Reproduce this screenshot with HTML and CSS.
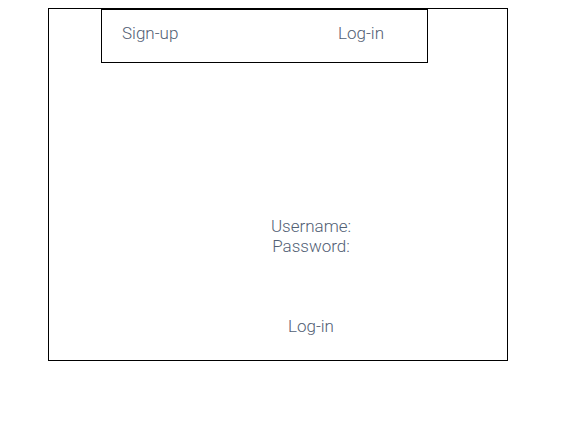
FILE: index.html
```html
<!DOCTYPE html>
<html lang="en">
<head>
<meta charset="utf-8">
<title>Log-in</title>
<link rel="stylesheet" href="styles.css">
</head>
<body>
<main class="page">
  <nav class="menu">
    <a class="menu-link" href="#signup">Sign-up</a>
    <a class="menu-link" href="#login">Log-in</a>
  </nav>
  <form class="login" id="login">
    <div class="fields">
      <div>Username:</div>
      <div>Password:</div>
    </div>
    <button class="submit" type="button">Log-in</button>
  </form>
</main>
</body>
</html>
```
FILE: styles.css
```css
* {
  box-sizing: border-box;
}

body {
  margin: 8px 71px 8px 48px;
  background: #fff;
  color: #526074;
  font: 300 17px/20px Roboto, "Liberation Sans", Arial, sans-serif;
}

.page {
  border: 1px solid #000;
}

.menu {
  display: flex;
  justify-content: space-between;
  margin: 0 79px 0 52px;
  padding: 13px 43px 19px 20px;
  border: 1px solid #000;
}

.menu-link {
  color: inherit;
  text-decoration: none;
}

.login {
  display: flex;
  flex-direction: column;
  align-items: center;
  gap: 60px;
  padding: 153px 0 24px 66px;
}

.fields {
  text-align: center;
}

.submit {
  padding: 0;
  border: 0;
  background: none;
  color: inherit;
  font: inherit;
}
```
